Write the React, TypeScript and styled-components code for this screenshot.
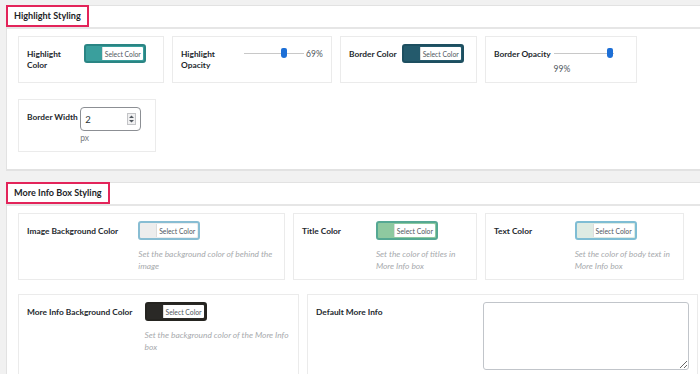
import React from "react";
import styled, { createGlobalStyle } from "styled-components";

const GlobalStyle = createGlobalStyle`
  html, body {
    margin: 0;
    background: #f1f1f1;
    font-family: Lato, "Open Sans", "Liberation Sans", sans-serif;
    color: #23282d;
  }
`;

const StyledPage = styled.div`
  padding: 5px 0 0 6px;
  display: flex;
  flex-direction: column;
  gap: 11px;
  height: 374px;
  box-sizing: border-box;
  overflow: hidden;
`;
const StyledPanel = styled.section`
  background: #fff;
  border: 1px solid #e2e2e2;
  border-bottom-width: 2px;
  border-right: none;
`;
const StyledPanelHeader = styled.div`
  height: 21px;
  border-bottom: 2px solid #e6e6e6;
  display: flex;
`;
const StyledPanelTitle = styled.h2`
  margin: -1px 0 0 -1px;
  height: 22px;
  box-sizing: border-box;
  border: 2px solid #e3245a;
  padding: 0 6px;
  font-size: 9.1px;
  font-weight: 700;
  line-height: 18px;
  color: #1d2327;
`;
const StyledPanelBody = styled.div<{ $gap: number; $pad: string }>`
  padding: ${p => p.$pad};
  display: flex;
  flex-direction: column;
  gap: ${p => p.$gap}px;
`;
const StyledRow = styled.div`
  display: flex;
  gap: 8px;
  align-items: stretch;
`;

// every option sits in a card: label column is ~45% of the card
const StyledCard = styled.div<{ $w: number; $minH?: number }>`
  width: ${p => p.$w}px;
  min-height: ${p => p.$minH ?? 0}px;
  flex-shrink: 0;
  box-sizing: border-box;
  background: #fff;
  border: 1px solid #ebebeb;
  display: flex;
  padding: 7px 0 7px 0;
`;
const StyledLabel = styled.div<{ $nowrap?: boolean }>`
  flex: 0 0 45%;
  min-width: 0;
  box-sizing: border-box;
  padding: 5px 5px 0 8px;
  font-size: 8.35px;
  font-weight: 700;
  line-height: 11px;
  color: #23282d;
  white-space: ${p => (p.$nowrap ? "nowrap" : "normal")};
`;
const StyledControl = styled.div`
  flex: 1;
  min-width: 0;
  padding-right: 8px;
`;

const StyledColorButton = styled.button<{ $c: string; $b: string }>`
  display: flex;
  align-items: stretch;
  width: 62px;
  height: 19px;
  padding: 0;
  border: 2px solid ${p => p.$b};
  border-radius: 3px;
  background: ${p => p.$c};
  cursor: pointer;
`;
const StyledSwatch = styled.span`
  width: 16px;
  flex-shrink: 0;
`;
const StyledColorText = styled.span`
  flex: 1;
  margin: 1px 1px 1px 0;
  background: #fff;
  border-left: 1px solid #dcdcdc;
  border-radius: 0 1px 1px 0;
  font-family: Lato, "Liberation Sans", sans-serif;
  font-size: 6.8px;
  color: #50575e;
  display: flex;
  align-items: center;
  justify-content: center;
`;

const StyledDesc = styled.p`
  margin: 8px 0 0;
  font-size: 8.4px;
  font-style: italic;
  line-height: 12px;
  color: #a7aaad;
`;

const StyledSliderWrap = styled.div`
  display: flex;
  flex-wrap: wrap;
  align-items: center;
  column-gap: 2px;
`;
const StyledSlider = styled.div`
  position: relative;
  width: 60px;
  height: 19px;
  &::before {
    content: "";
    position: absolute;
    left: 0;
    right: 0;
    top: 9px;
    height: 1px;
    background: #c8c8c8;
  }
`;
const StyledThumb = styled.span`
  position: absolute;
  top: 4px;
  width: 6px;
  height: 10px;
  margin-left: -3px;
  border-radius: 2px 2px 3px 3px;
  background: #1d6fd6;
`;
const StyledPercent = styled.span`
  font-size: 8.5px;
  line-height: 12px;
  color: #50575e;
`;

const StyledNumberBox = styled.div`
  width: 61px;
  height: 24px;
  box-sizing: border-box;
  border: 1px solid #8c8f94;
  border-radius: 4px;
  display: flex;
  align-items: center;
  justify-content: space-between;
  padding: 0 4px 0 4px;
  font-size: 9.5px;
  color: #2c3338;
`;
const StyledSpinner = styled.span`
  width: 7px;
  height: 10px;
  border: 1px solid #c3c4c7;
  background: #f0f0f1;
  display: flex;
`;
const StyledUnit = styled.div`
  margin-top: 1px;
  font-size: 8.5px;
  line-height: 12px;
  color: #787c82;
`;

const StyledTextArea = styled.textarea`
  display: block;
  width: 100%;
  height: 68px;
  box-sizing: border-box;
  border: 1px solid #c1c5ca;
  border-radius: 3px;
  margin: 0;
  font-family: inherit;
`;

function ColorPick({ color, border }: { color: string; border: string }) {
  return (
    <StyledColorButton $c={color} $b={border}>
      <StyledSwatch />
      <StyledColorText>Select Color</StyledColorText>
    </StyledColorButton>
  );
}

function Slider({ value }: { value: number }) {
  // thumb travels inside the track, 3px in from each end
  const left = 3 + (54 * value) / 100;
  return (
    <StyledSliderWrap>
      <StyledSlider>
        <StyledThumb style={{ left }} />
      </StyledSlider>
      <StyledPercent>{value}%</StyledPercent>
    </StyledSliderWrap>
  );
}

function Option({ w, label, minH, nowrap, children }: {
  w: number; label: string; minH?: number; nowrap?: boolean; children: React.ReactNode
}) {
  return (
    <StyledCard $w={w} $minH={minH}>
      <StyledLabel $nowrap={nowrap}>{label}</StyledLabel>
      <StyledControl>{children}</StyledControl>
    </StyledCard>
  );
}

export default function App() {
  return (
    <>
      <GlobalStyle />
      <StyledPage>
        <StyledPanel>
          <StyledPanelHeader>
            <StyledPanelTitle>Highlight Styling</StyledPanelTitle>
          </StyledPanelHeader>
          <StyledPanelBody $gap={16} $pad="7px 0 17px 11px">
            <StyledRow>
              <Option w={146} label="Highlight Color">
                <ColorPick color="#3a9f9d" border="#2a8584" />
              </Option>
              <Option w={160} label="Highlight Opacity">
                <Slider value={69} />
              </Option>
              <Option w={137} label="Border Color" nowrap>
                <ColorPick color="#245a6c" border="#1d4f60" />
              </Option>
              <Option w={152} label="Border Opacity" nowrap>
                <Slider value={99} />
              </Option>
            </StyledRow>
            <StyledRow>
              <Option w={138} label="Border Width" nowrap>
                <StyledNumberBox>
                  2
                  <StyledSpinner>
                    <svg width="7" height="10" viewBox="0 0 7 10">
                      <path d="M3.5 1.5 L6 4 H1 Z M3.5 8.5 L6 6 H1 Z" fill="#50575e" />
                    </svg>
                  </StyledSpinner>
                </StyledNumberBox>
                <StyledUnit>px</StyledUnit>
              </Option>
            </StyledRow>
          </StyledPanelBody>
        </StyledPanel>

        <StyledPanel>
          <StyledPanelHeader>
            <StyledPanelTitle>More Info Box Styling</StyledPanelTitle>
          </StyledPanelHeader>
          <StyledPanelBody $gap={14} $pad="7px 0 0 11px">
            <StyledRow>
              <Option w={267} label="Image Background Color">
                <ColorPick color="#ededed" border="#88bdd3" />
                <StyledDesc>Set the background color of behind the image</StyledDesc>
              </Option>
              <Option w={184} label="Title Color">
                <ColorPick color="#8ec9a0" border="#55a893" />
                <StyledDesc>Set the color of titles in More Info box</StyledDesc>
              </Option>
              <Option w={199} label="Text Color">
                <ColorPick color="#deebe3" border="#7fbdd4" />
                <StyledDesc>Set the color of body text in More Info box</StyledDesc>
              </Option>
            </StyledRow>
            <StyledRow>
              <Option w={281} label="More Info Background Color" minH={100}>
                <ColorPick color="#2a2926" border="#252420" />
                <StyledDesc>Set the background color of the More Info box</StyledDesc>
              </Option>
              <Option w={391} label="Default More Info" minH={100}>
                <StyledTextArea />
              </Option>
            </StyledRow>
          </StyledPanelBody>
        </StyledPanel>
      </StyledPage>
    </>
  );
}
